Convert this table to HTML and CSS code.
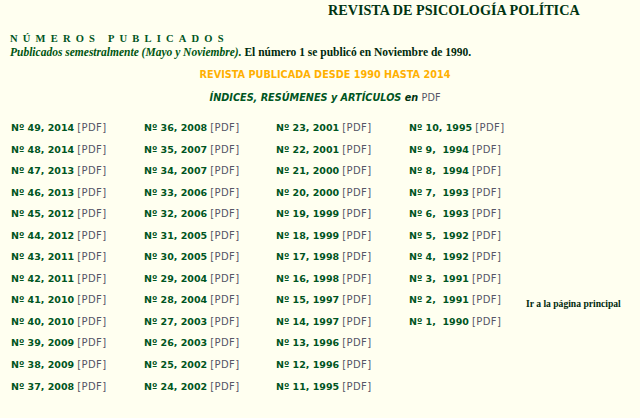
FILE: index.html
```html
<!DOCTYPE html>
<html lang="es">
<head>
<meta charset="utf-8">
<title>Revista de Psicología Política</title>
<link rel="stylesheet" href="styles.css">
</head>
<body>
<div class="page">
  <h1 class="title">REVISTA DE PSICOLOGÍA POLÍTICA</h1>
  <h2 class="section">NÚMEROS PUBLICADOS</h2>
  <p class="intro"><em>Publicados semestralmente (Mayo y Noviembre).</em> El número 1 se publicó en Noviembre de 1990.</p>
  <p class="since">REVISTA PUBLICADA DESDE 1990 HASTA 2014</p>
  <p class="indexes">ÍNDICES, RESÚMENES y ARTÍCULOS <span class="en">en</span> <span class="pdfword">PDF</span></p>

  <div class="issues">
    <div class="col">
      <div class="item"><b>Nº 49, 2014</b> <a>[PDF]</a></div>
      <div class="item"><b>Nº 48, 2014</b> <a>[PDF]</a></div>
      <div class="item"><b>Nº 47, 2013</b> <a>[PDF]</a></div>
      <div class="item"><b>Nº 46, 2013</b> <a>[PDF]</a></div>
      <div class="item"><b>Nº 45, 2012</b> <a>[PDF]</a></div>
      <div class="item"><b>Nº 44, 2012</b> <a>[PDF]</a></div>
      <div class="item"><b>Nº 43, 2011</b> <a>[PDF]</a></div>
      <div class="item"><b>Nº 42, 2011</b> <a>[PDF]</a></div>
      <div class="item"><b>Nº 41, 2010</b> <a>[PDF]</a></div>
      <div class="item"><b>Nº 40, 2010</b> <a>[PDF]</a></div>
      <div class="item"><b>Nº 39, 2009</b> <a>[PDF]</a></div>
      <div class="item"><b>Nº 38, 2009</b> <a>[PDF]</a></div>
      <div class="item"><b>Nº 37, 2008</b> <a>[PDF]</a></div>
    </div>
    <div class="col">
      <div class="item"><b>Nº 36, 2008</b> <a>[PDF]</a></div>
      <div class="item"><b>Nº 35, 2007</b> <a>[PDF]</a></div>
      <div class="item"><b>Nº 34, 2007</b> <a>[PDF]</a></div>
      <div class="item"><b>Nº 33, 2006</b> <a>[PDF]</a></div>
      <div class="item"><b>Nº 32, 2006</b> <a>[PDF]</a></div>
      <div class="item"><b>Nº 31, 2005</b> <a>[PDF]</a></div>
      <div class="item"><b>Nº 30, 2005</b> <a>[PDF]</a></div>
      <div class="item"><b>Nº 29, 2004</b> <a>[PDF]</a></div>
      <div class="item"><b>Nº 28, 2004</b> <a>[PDF]</a></div>
      <div class="item"><b>Nº 27, 2003</b> <a>[PDF]</a></div>
      <div class="item"><b>Nº 26, 2003</b> <a>[PDF]</a></div>
      <div class="item"><b>Nº 25, 2002</b> <a>[PDF]</a></div>
      <div class="item"><b>Nº 24, 2002</b> <a>[PDF]</a></div>
    </div>
    <div class="col">
      <div class="item"><b>Nº 23, 2001</b> <a>[PDF]</a></div>
      <div class="item"><b>Nº 22, 2001</b> <a>[PDF]</a></div>
      <div class="item"><b>Nº 21, 2000</b> <a>[PDF]</a></div>
      <div class="item"><b>Nº 20, 2000</b> <a>[PDF]</a></div>
      <div class="item"><b>Nº 19, 1999</b> <a>[PDF]</a></div>
      <div class="item"><b>Nº 18, 1999</b> <a>[PDF]</a></div>
      <div class="item"><b>Nº 17, 1998</b> <a>[PDF]</a></div>
      <div class="item"><b>Nº 16, 1998</b> <a>[PDF]</a></div>
      <div class="item"><b>Nº 15, 1997</b> <a>[PDF]</a></div>
      <div class="item"><b>Nº 14, 1997</b> <a>[PDF]</a></div>
      <div class="item"><b>Nº 13, 1996</b> <a>[PDF]</a></div>
      <div class="item"><b>Nº 12, 1996</b> <a>[PDF]</a></div>
      <div class="item"><b>Nº 11, 1995</b> <a>[PDF]</a></div>
    </div>
    <div class="col">
      <div class="item"><b>Nº 10, 1995</b> <a>[PDF]</a></div>
      <div class="item"><b>Nº 9,&nbsp; 1994</b> <a>[PDF]</a></div>
      <div class="item"><b>Nº 8,&nbsp; 1994</b> <a>[PDF]</a></div>
      <div class="item"><b>Nº 7,&nbsp; 1993</b> <a>[PDF]</a></div>
      <div class="item"><b>Nº 6,&nbsp; 1993</b> <a>[PDF]</a></div>
      <div class="item"><b>Nº 5,&nbsp; 1992</b> <a>[PDF]</a></div>
      <div class="item"><b>Nº 4,&nbsp; 1992</b> <a>[PDF]</a></div>
      <div class="item"><b>Nº 3,&nbsp; 1991</b> <a>[PDF]</a></div>
      <div class="item"><b>Nº 2,&nbsp; 1991</b> <a>[PDF]</a></div>
      <div class="item"><b>Nº 1,&nbsp; 1990</b> <a>[PDF]</a></div>
    </div>
    <div class="col home">
      <a class="homelink">Ir a la página principal</a>
    </div>
  </div>
</div>
</body>
</html>
```
FILE: styles.css
```css
html, body {
  margin: 0;
  padding: 0;
  background: #fffff0;
}
.page {
  width: 640px;
  height: 418px;
  padding: 0 0 0 10px;
  box-sizing: border-box;
  font-family: "Liberation Serif", "Times New Roman", serif;
  color: #003311;
}
.title {
  margin: 0;
  padding: 2px 0 0 318px;
  font-size: 14.2px;
  line-height: 17px;
  font-weight: bold;
  color: #003311;
}
.section {
  margin: 14px 0 0 0;
  font-size: 10.5px;
  line-height: 12px;
  letter-spacing: 5.2px;
  font-weight: bold;
  color: #005522;
}
.intro {
  margin: 0;
  font-size: 11.5px;
  line-height: 14px;
  font-weight: bold;
  color: #002a0c;
}
.intro em {
  color: #005511;
}
.since {
  margin: 10px 0 0 0;
  text-align: center;
  font-family: "DejaVu Sans", Verdana, sans-serif;
  font-size: 9.7px;
  line-height: 12px;
  font-weight: bold;
  color: #ffb000;
}
.indexes {
  margin: 11px 0 0 0;
  text-align: center;
  font-family: "DejaVu Sans", Verdana, sans-serif;
  font-size: 9.7px;
  line-height: 12px;
  font-weight: bold;
  font-style: italic;
  color: #005522;
}
.indexes .en {
  color: #003311;
}
.indexes .pdfword {
  font-style: normal;
  font-weight: normal;
  color: #555566;
}
.issues {
  display: flex;
  margin-top: 13px;
  padding-left: 1px;
  font-family: "DejaVu Sans", Verdana, sans-serif;
  font-size: 9.5px;
}
.col {
  display: flex;
  flex-direction: column;
  width: 133px;
}
.col:nth-child(2) {
  width: 132px;
}
.item {
  height: 21.55px;
  line-height: 21.55px;
  white-space: nowrap;
}
.item b {
  color: #005522;
}
.item a {
  font-size: 10px;
  letter-spacing: 0.4px;
  color: #555566;
}
.home {
  width: auto;
}
.homelink {
  display: block;
  margin: 181px 0 0 -16px;
  font-family: "Liberation Serif", "Times New Roman", serif;
  font-size: 9.6px;
  line-height: 12px;
  font-weight: bold;
  color: #002a0c;
}
```
